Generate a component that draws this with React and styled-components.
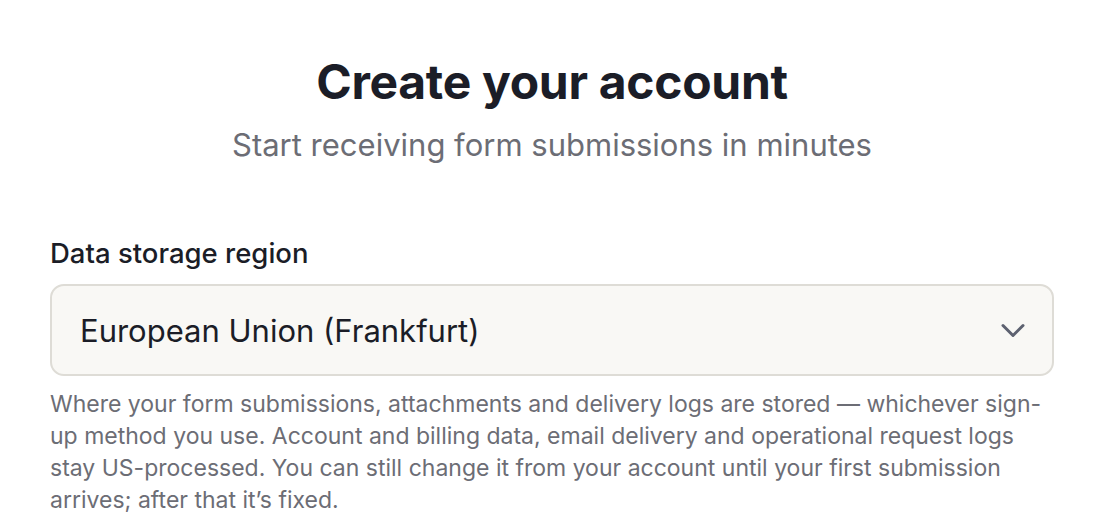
import styled, { createGlobalStyle } from "styled-components";

const GlobalStyle = createGlobalStyle`
  body {
    margin: 0;
    background: #ffffff;
    font-family: "Inter", "Noto Sans", sans-serif;
  }
`;

const Page = styled.div`
  max-width: 1004px;
  margin: 0 auto;
  padding: 54px 0 0;
  display: flex;
  flex-direction: column;
`;

const Header = styled.header`
  display: flex;
  flex-direction: column;
  align-items: center;
  gap: 15px;
  margin-bottom: 70px;
`;

const Title = styled.h1`
  margin: 0;
  font-size: 48px;
  line-height: 56px;
  font-weight: 700;
  color: #1b1d27;
  letter-spacing: -0.3px;
`;

const Subtitle = styled.p`
  margin: 0;
  font-size: 31px;
  line-height: 40px;
  color: #6c6d75;
`;

const Field = styled.div`
  display: flex;
  flex-direction: column;
`;

const Label = styled.label`
  font-size: 27.5px;
  line-height: 36px;
  font-weight: 500;
  color: #1b1d27;
  margin-bottom: 13px;
`;

const Select = styled.div`
  height: 88px;
  border: 2px solid #dedcd6;
  border-radius: 14px;
  background: #f9f8f5;
  display: flex;
  align-items: center;
  justify-content: space-between;
  padding: 0 27px 0 28px;
  font-size: 31px;
  color: #1b1d27;
`;

const Help = styled.p`
  margin: 12px 0 0;
  font-size: 23px;
  line-height: 32px;
  color: #6c6d75;
`;

const Chevron = () => (
  <svg width="24" height="15" viewBox="0 0 24 15" fill="none" stroke="#5d6170" strokeWidth="3" strokeLinecap="round" strokeLinejoin="round">
    <path d="M2 2.5l10 10 10-10" />
  </svg>
);

export default function App() {
  return (
    <>
      <GlobalStyle />
      <Page>
        <Header>
          <Title>Create your account</Title>
          <Subtitle>Start receiving form submissions in minutes</Subtitle>
        </Header>
        <Field>
          <Label>Data storage region</Label>
          <Select>
            <span>European Union (Frankfurt)</span>
            <Chevron />
          </Select>
          <Help>
            Where your form submissions, attachments and delivery logs are stored — whichever sign-up method you use. Account and billing data, email delivery and operational request logs stay US-processed. You can still change it from your account until your first submission arrives; after that it’s fixed.
          </Help>
        </Field>
      </Page>
    </>
  );
}
